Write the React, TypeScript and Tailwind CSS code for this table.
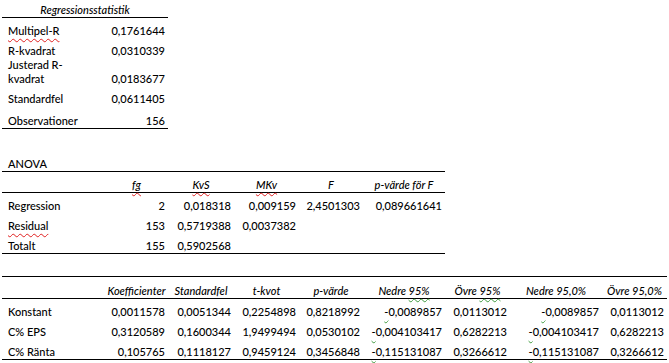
import React from "react";

// Excel-style regression output, pasted into a document (hence the squiggles)
const red = "underline decoration-wavy decoration-[#e02020] decoration-1 underline-offset-[3px]";
const green = "underline decoration-wavy decoration-[#3f9b3f] decoration-1 underline-offset-[3px]";

const topCols = "grid grid-cols-[103px_63px] w-[166px]";
const anovaCols = "grid grid-cols-[103px_63px_66px_65px_64px_82px] w-[443px]";
const coefCols = "grid grid-cols-[103px_63px_66px_65px_64px_82px_65px_92px_65px] w-[665px]";

function Num({ v }: { v: string }) {
  if (v.startsWith("-")) {
    return (
      <>
        <span className={green}>-</span>
        {v.slice(1)}
      </>
    );
  }
  return <>{v}</>;
}

function Label({ children }: { children: React.ReactNode }) {
  return <div className="pl-[6px] whitespace-nowrap">{children}</div>;
}

function Val({ v }: { v?: string }) {
  return <div className="pr-[3px] text-right whitespace-nowrap">{v ? <Num v={v} /> : null}</div>;
}

function Head({ children }: { children?: React.ReactNode }) {
  return <div className="text-center italic whitespace-nowrap">{children}</div>;
}

const stats: [React.ReactNode, string, string][] = [
  [<span className={red}>Multipel-R</span>, "0,1761644", "h-[20px]"],
  ["R-kvadrat", "0,0310339", "h-[20px]"],
  [
    <>
      Justerad R-
      <br />
      kvadrat
    </>,
    "0,0183677",
    "h-[28px]",
  ],
  ["Standardfel", "0,0611405", "h-[20px]"],
];

const anova: [React.ReactNode, string[]][] = [
  ["Regression", ["2", "0,018318", "0,009159", "2,4501303", "0,089661641"]],
  [<span className={red}>Residual</span>, ["153", "0,5719388", "0,0037382"]],
];

const coefs: [string, string[]][] = [
  ["Konstant", ["0,0011578", "0,0051344", "0,2254898", "0,8218992", "-0,0089857", "0,0113012", "-0,0089857", "0,0113012"]],
  ["C% EPS", ["0,3120589", "0,1600344", "1,9499494", "0,0530102", "-0,004103417", "0,6282213", "-0,004103417", "0,6282213"]],
];

export default function App() {
  return (
    <div className="w-[669px] h-[363px] overflow-hidden bg-white pl-[2px] text-black text-[11px] leading-[14px] font-medium font-['Lato',sans-serif]">
      {/* Regressionsstatistik */}
      <div className={`${topCols} h-[18px] items-end border-b border-black`}>
        <div className="col-span-2 text-center italic">Regressionsstatistik</div>
      </div>
      {stats.map(([label, v, h], i) => (
        <div key={i} className={`${topCols} ${h} items-end`}>
          <Label>{label}</Label>
          <Val v={v} />
        </div>
      ))}
      <div className={`${topCols} h-[23px] items-end border-b border-black`}>
        <Label>Observationer</Label>
        <Val v="156" />
      </div>

      {/* ANOVA */}
      <div className={`${anovaCols} h-[20px] mt-[22px] items-end`}>
        <Label>ANOVA</Label>
      </div>
      <div className={`${anovaCols} h-[22px] items-end border-y border-black`}>
        <div />
        <Head>
          <span className={red}>fg</span>
        </Head>
        <Head>
          <span className={red}>KvS</span>
        </Head>
        <Head>
          <span className={red}>MKv</span>
        </Head>
        <Head>F</Head>
        <Head>p-värde för F</Head>
      </div>
      {anova.map(([label, vals], i) => (
        <div key={i} className={`${anovaCols} h-[20px] items-end`}>
          <Label>{label}</Label>
          {vals.map((v, j) => (
            <Val key={j} v={v} />
          ))}
        </div>
      ))}
      <div className={`${anovaCols} h-[21px] items-end border-b border-black`}>
        <Label>Totalt</Label>
        <Val v="155" />
        <Val v="0,5902568" />
      </div>

      {/* Koefficienter */}
      <div className={`${coefCols} h-[23px] mt-[22px] items-end border-y border-black`}>
        <div />
        <Head>Koefficienter</Head>
        <Head>Standardfel</Head>
        <Head>t-kvot</Head>
        <Head>p-värde</Head>
        <Head>
          Nedre <span className={green}>95%</span>
        </Head>
        <Head>
          Övre <span className={green}>95%</span>
        </Head>
        <Head>Nedre 95,0%</Head>
        <Head>Övre 95,0%</Head>
      </div>
      {coefs.map(([label, vals], i) => (
        <div key={i} className={`${coefCols} h-[20px] items-end`}>
          <Label>{label}</Label>
          {vals.map((v, j) => (
            <Val key={j} v={v} />
          ))}
        </div>
      ))}
      <div className={`${coefCols} h-[21px] items-end border-b border-black`}>
        <Label>C% Ränta</Label>
        {["0,105765", "0,1118127", "0,9459124", "0,3456848", "-0,115131087", "0,3266612", "-0,115131087", "0,3266612"].map((v, j) => (
          <Val key={j} v={v} />
        ))}
      </div>
    </div>
  );
}
